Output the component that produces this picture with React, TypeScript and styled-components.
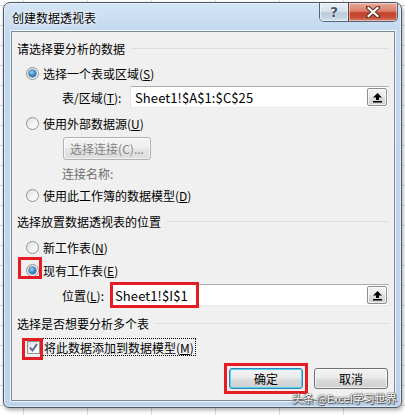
import React from 'react';
import styled, { createGlobalStyle } from 'styled-components';

const GlobalStyle = createGlobalStyle`
  html, body {
    margin: 0;
    padding: 0;
    background: #ffffff;
  }
  body {
    font-family: "Noto Sans CJK SC", "Noto Sans", sans-serif;
    font-size: 12px;
    color: #000;
  }
`;

// 背景：Excel 表格网格
const Page = styled.div`
  position: relative;
  width: 405px;
  height: 415px;
  box-sizing: border-box;
  padding: 2px 3px 0 3px;
  overflow: hidden;
  background-color: #ffffff;
  background-image:
    linear-gradient(to right, #dadcdd 1px, transparent 1px),
    linear-gradient(to bottom, #dadcdd 1px, transparent 1px);
  background-size: 64px 20px;
  background-position: 23px 5px;
`;

const Window = styled.div`
  width: 399px;
  height: 406px;
  box-sizing: border-box;
  display: flex;
  flex-direction: column;
  padding: 0 6px 6px 7px;
  border: 1px solid #4b5866;
  border-radius: 7px 7px 6px 6px;
  background: linear-gradient(to bottom, #d3e4f6 0px, #c3d8ef 30px, #bcd3ec 100%);
  box-shadow: 0 0 0 1px rgba(255, 255, 255, 0.5) inset, 1px 2px 4px rgba(0, 0, 0, 0.35);
`;

const TitleBar = styled.div`
  height: 28px;
  flex-shrink: 0;
  display: flex;
  align-items: center;
  margin: 0 -6px 0 -7px;
  padding: 0 3px 0 8px;
`;

const Title = styled.div`
  flex: 1;
  padding-top: 1px;
  font-size: 12px;
  color: #000;
  text-shadow: 0 0 6px #ffffff, 0 0 3px #ffffff;
`;

const CaptionGroup = styled.div`
  align-self: flex-start;
  display: flex;
  height: 18px;
  border: 1px solid #56657a;
  border-top: none;
  border-radius: 0 0 5px 5px;
  overflow: hidden;
`;

const CaptionButton = styled.div<{ $close?: boolean }>`
  width: ${p => (p.$close ? '48px' : '28px')};
  height: 18px;
  display: flex;
  align-items: center;
  justify-content: center;
  border-left: ${p => (p.$close ? '1px solid #6b3b35' : 'none')};
  background: ${p =>
    p.$close
      ? 'linear-gradient(to bottom, #e9a899 0%, #d9806c 45%, #c2412b 55%, #c84f37 80%, #d6826a 100%)'
      : 'linear-gradient(to bottom, #e8eff7 0%, #d6e2ef 45%, #bccbdc 55%, #c4d3e3 80%, #d8e4f0 100%)'};
  box-shadow: inset 0 0 0 1px rgba(255, 255, 255, 0.45);
`;

const HelpGlyph = styled.span`
  font-family: "DejaVu Sans", sans-serif;
  font-weight: bold;
  font-size: 14px;
  line-height: 1;
  color: #4a5668;
  text-shadow: 0 0 1px #fff, 0 0 2px #fff;
`;

const Client = styled.div`
  flex: 1;
  display: flex;
  flex-direction: column;
  padding: 7px 5px 0 5px;
  background: #f0f0f0;
  border: 1px solid #7d8b99;
  box-shadow: 0 0 0 1px rgba(255, 255, 255, 0.75);
`;

const GroupHeader = styled.div<{ $mt?: number }>`
  height: 18px;
  margin-top: ${p => p.$mt ?? 0}px;
  display: flex;
  align-items: center;
  gap: 6px;
  white-space: nowrap;

  &::after {
    content: '';
    flex: 1;
    height: 1px;
    background: #d5dfe5;
  }
`;

const OptionRow = styled.div<{ $mt?: number }>`
  position: relative;
  height: 20px;
  margin-top: ${p => p.$mt ?? 0}px;
  display: flex;
  align-items: center;
  gap: 4px;
  padding-left: 9px;
`;

const RadioWrap = styled.span`
  position: relative;
  display: inline-flex;
`;

const Radio = styled.span<{ $checked?: boolean }>`
  width: 13px;
  height: 13px;
  box-sizing: border-box;
  border-radius: 50%;
  border: 1px solid #8f9294;
  background: linear-gradient(135deg, #dcdcdc 0%, #f6f6f6 60%, #ffffff 100%);
  display: flex;
  align-items: center;
  justify-content: center;

  &::after {
    content: '';
    display: ${p => (p.$checked ? 'block' : 'none')};
    width: 7px;
    height: 7px;
    border-radius: 50%;
    background: radial-gradient(circle at 40% 35%, #9fd6f7 0%, #3b90cf 45%, #0d4e86 100%);
    box-shadow: 0 0 0 0.5px #1a3f62;
  }
`;

const CheckBox = styled.span`
  position: relative;
  width: 13px;
  height: 13px;
  box-sizing: border-box;
  border: 1px solid #8f9294;
  background: linear-gradient(135deg, #dcdcdc 0%, #f4f4f4 60%, #ffffff 100%);
  display: flex;
  align-items: center;
  justify-content: center;
`;

const CheckRow = styled(OptionRow)`
  padding-left: 10px;
  gap: 2px;
`;

const FocusLabel = styled.span`
  height: 18px;
  box-sizing: border-box;
  display: flex;
  align-items: center;
  padding: 0 1px;
  border: 1px dotted #000;
`;

const FieldRow = styled.div<{ $mt?: number }>`
  height: 22px;
  margin-top: ${p => p.$mt ?? 0}px;
  display: flex;
  align-items: center;
  padding-left: 45px;
`;

const FieldLabel = styled.span<{ $w: number }>`
  width: ${p => p.$w}px;
  flex-shrink: 0;
  white-space: nowrap;
`;

const TextBox = styled.div`
  position: relative;
  flex: 1;
  height: 22px;
  box-sizing: border-box;
  display: flex;
  align-items: center;
  padding: 0 1px 0 4px;
  background: #ffffff;
  border: 1px solid #abadb3;
  border-left-color: #e2e3ea;
  border-right-color: #e3e9ef;
  border-bottom-color: #e3e9ef;
`;

const TextValue = styled.span`
  flex: 1;
  font-size: 13px;
  letter-spacing: 0.1px;
`;

const PickButton = styled.div`
  width: 20px;
  height: 18px;
  box-sizing: border-box;
  display: flex;
  align-items: center;
  justify-content: center;
  border: 1px solid #8d8d8d;
  border-radius: 2px;
  background: linear-gradient(to bottom, #f2f2f2 0%, #ebebeb 49%, #dddddd 51%, #cfcfcf 100%);
  box-shadow: inset 0 0 0 1px rgba(255, 255, 255, 0.7);
`;

const DisabledButton = styled.div<{ $mt?: number }>`
  width: 88px;
  height: 23px;
  margin-top: ${p => p.$mt ?? 0}px;
  margin-left: 46px;
  box-sizing: border-box;
  display: flex;
  align-items: center;
  justify-content: center;
  color: #838383;
  border: 1px solid #adb2b5;
  border-radius: 3px;
  background: linear-gradient(to bottom, #f4f4f4 0%, #efefef 49%, #e6e6e6 51%, #dcdcdc 100%);
  box-shadow: inset 0 0 0 1px rgba(255, 255, 255, 0.6);
`;

const MutedText = styled.div<{ $mt?: number }>`
  height: 18px;
  margin-top: ${p => p.$mt ?? 0}px;
  padding-left: 45px;
  display: flex;
  align-items: center;
  color: #6d6d6d;
`;

const ButtonBar = styled.div<{ $mt?: number }>`
  margin-top: ${p => p.$mt ?? 0}px;
  display: flex;
  justify-content: flex-end;
  gap: 11px;
  padding-right: 1px;
`;

const PushButton = styled.div<{ $default?: boolean }>`
  position: relative;
  width: 74px;
  height: 21px;
  box-sizing: border-box;
  display: flex;
  align-items: center;
  justify-content: center;
  border: 1px solid ${p => (p.$default ? '#3c7fb1' : '#707070')};
  border-radius: 3px;
  background: linear-gradient(to bottom, #f2f2f2 0%, #ebebeb 49%, #dddddd 51%, #cfcfcf 100%);
  box-shadow: inset 0 0 0 1px ${p => (p.$default ? '#48d7f6' : 'rgba(255, 255, 255, 0.7)')};
`;

// 红框标注
const Mark = styled.span<{ $top: number; $left: number; $w: number; $h: number }>`
  position: absolute;
  top: ${p => p.$top}px;
  left: ${p => p.$left}px;
  width: ${p => p.$w}px;
  height: ${p => p.$h}px;
  box-sizing: border-box;
  border: 3px solid #e51c23;
  pointer-events: none;
`;

const Watermark = styled.div`
  position: absolute;
  left: 292px;
  top: 391px;
  font-size: 11px;
  line-height: 14px;
  color: #ffffff;
  white-space: nowrap;
  text-shadow: 0 0 1px #333, 0 0 2px #555, 1px 1px 1px #444;
`;

const UpArrow = () => (
  <svg width="11" height="11" viewBox="0 0 11 11">
    <path d="M5.5 1 L10 5.5 L7 5.5 L7 8 L4 8 L4 5.5 L1 5.5 Z" fill="#000" />
    <rect x="1" y="9" width="9" height="1.5" fill="#000" />
  </svg>
);

const CloseGlyph = () => (
  <svg width="14" height="12" viewBox="0 0 14 12">
    <path d="M2 1.5 L12 10.5 M12 1.5 L2 10.5" stroke="#5a2a22" strokeWidth="4" strokeLinecap="square" />
    <path d="M2.5 2 L11.5 10 M11.5 2 L2.5 10" stroke="#ffffff" strokeWidth="2.2" strokeLinecap="square" />
  </svg>
);

const CheckGlyph = () => (
  <svg width="9" height="9" viewBox="0 0 9 9">
    <path d="M1 4.5 L3.5 7.5 L8 1" stroke="#4d61a5" strokeWidth="1.8" fill="none" />
  </svg>
);

const App: React.FC = () => {
  return (
    <Page>
      <GlobalStyle />
      <Window>
        <TitleBar>
          <Title>创建数据透视表</Title>
          <CaptionGroup>
            <CaptionButton>
              <HelpGlyph>?</HelpGlyph>
            </CaptionButton>
            <CaptionButton $close>
              <CloseGlyph />
            </CaptionButton>
          </CaptionGroup>
        </TitleBar>

        <Client>
          {/* 数据来源 */}
          <GroupHeader>请选择要分析的数据</GroupHeader>
          <OptionRow $mt={6}>
            <Radio $checked />
            <span>选择一个表或区域(<u>S</u>)</span>
          </OptionRow>
          <FieldRow $mt={3}>
            <FieldLabel $w={68}>表/区域(<u>T</u>):</FieldLabel>
            <TextBox>
              <TextValue>Sheet1!$A$1:$C$25</TextValue>
              <PickButton>
                <UpArrow />
              </PickButton>
            </TextBox>
          </FieldRow>
          <OptionRow $mt={5}>
            <Radio />
            <span>使用外部数据源(<u>U</u>)</span>
          </OptionRow>
          <DisabledButton $mt={4}>选择连接(C)...</DisabledButton>
          <MutedText $mt={4}>连接名称:</MutedText>
          <OptionRow $mt={3}>
            <Radio />
            <span>使用此工作簿的数据模型(<u>D</u>)</span>
          </OptionRow>

          {/* 放置位置 */}
          <GroupHeader $mt={7}>选择放置数据透视表的位置</GroupHeader>
          <OptionRow $mt={7}>
            <Radio />
            <span>新工作表(<u>N</u>)</span>
          </OptionRow>
          <OptionRow $mt={3}>
            <RadioWrap>
              <Radio $checked />
              <Mark $top={-7} $left={-8} $w={24} $h={22} />
            </RadioWrap>
            <span>现有工作表(<u>E</u>)</span>
          </OptionRow>
          <FieldRow $mt={4}>
            <FieldLabel $w={48}>位置(<u>L</u>):</FieldLabel>
            <TextBox>
              <TextValue>Sheet1!$I$1</TextValue>
              <PickButton>
                <UpArrow />
              </PickButton>
              <Mark $top={-3} $left={-1} $w={89} $h={26} />
            </TextBox>
          </FieldRow>

          {/* 多表分析 */}
          <GroupHeader $mt={8}>选择是否想要分析多个表</GroupHeader>
          <CheckRow $mt={5}>
            <CheckBox>
              <CheckGlyph />
              <Mark $top={-4} $left={-6} $w={21} $h={22} />
            </CheckBox>
            <FocusLabel>将此数据添加到数据模型(<u>M</u>)</FocusLabel>
          </CheckRow>

          <ButtonBar $mt={11}>
            <PushButton $default>
              确定
              <Mark $top={-6} $left={-6} $w={84} $h={31} />
            </PushButton>
            <PushButton>取消</PushButton>
          </ButtonBar>
        </Client>
      </Window>
      <Watermark>头条 @Excel学习世界</Watermark>
    </Page>
  );
};

export default App;
